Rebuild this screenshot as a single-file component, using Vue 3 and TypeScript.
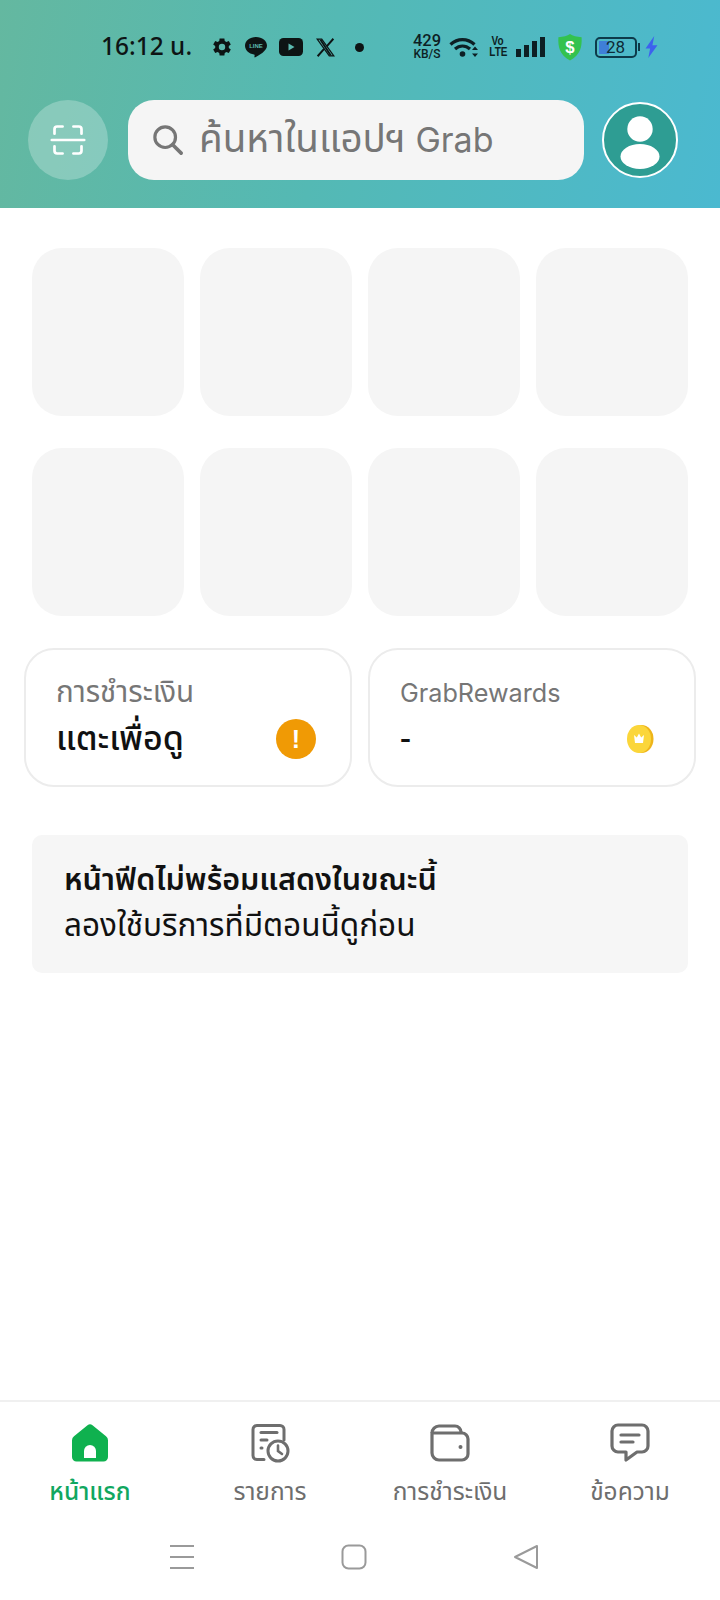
<template>
  <div class="page">
    <header class="header">
      <div class="status">
        <span class="time">16:12 น.</span>
        <svg class="st-gear" viewBox="0 0 24 24" width="22" height="22">
          <path fill="#0d1414" d="M19.4 13a7.500 7.500 0 0 0 0-2l2.200-1.700-2.200-3.800-2.600 1a7.500 7.500 0 0 0-1.800-1L14.600 2.700h-5.200L9 5.500a7.500 7.500 0 0 0-1.800 1l-2.600-1-2.200 3.800L4.600 11a7.500 7.500 0 0 0 0 2l-2.200 1.700 2.200 3.800 2.600-1a7.500 7.500 0 0 0 1.800 1l.4 2.800h5.200l.4-2.800a7.500 7.500 0 0 0 1.800-1l2.600 1 2.200-3.800zM12 15.500a3.500 3.500 0 1 1 0-7 3.500 3.500 0 0 1 0 7z" />
        </svg>
        <span class="st-line">
          <svg viewBox="0 0 24 24" width="24" height="24">
            <path fill="#0d1414" d="M12 2C5.800 2 1 5.900 1 10.800c0 4.400 3.800 8 9 8.700.6.100.7.500.6 1l-.2 1.300c0 .5.300.8 1 .5 2.900-1.400 11.600-6.300 11.600-11.500C23 5.900 18.200 2 12 2z" />
          </svg>
          <span class="st-line-text">LINE</span>
        </span>
        <svg class="st-yt" viewBox="0 0 24 18" width="24" height="18">
          <rect width="24" height="18" rx="4.500" fill="#0d1414" />
          <path d="M9.500 5.500v7l6-3.500z" fill="#5bbab0" />
        </svg>
        <svg class="st-x" viewBox="0 0 24 24" width="21" height="21">
          <path fill="none" stroke="#0d1414" stroke-width="1.400" d="M2.500 2.500h5.200l13.800 19h-5.200z" />
          <path fill="none" stroke="#0d1414" stroke-width="2.200" d="M21 2l-7.600 8.600M10.400 13.600 3 22" />
          <path fill="#0d1414" d="M5 3h2.500l11.800 18h-2.500z" />
        </svg>
        <span class="st-dot"></span>
        <span class="st-speed"><b>429</b><i>KB/S</i></span>
        <svg class="st-wifi" viewBox="0 0 30 24" width="30" height="24">
          <g fill="none" stroke="#0d1f24" stroke-width="3.200">
            <path d="M1.500 9.500c7-6.600 17-6.600 24 0" />
            <path d="M6 14c4.500-4 10.500-4 15 0" />
          </g>
          <circle cx="13.500" cy="19" r="2.800" fill="#0d1f24" />
          <path d="M26 11.500l3 3.500h-6zM26 22l3-3.500h-6z" fill="#0d1f24" />
        </svg>
        <span class="st-volte"><b>Vo</b><b>LTE</b></span>
        <span class="st-signal">
          <i v-for="h in signalBars" :key="h" :style="{ height: h + 'px' }"></i>
        </span>
        <svg class="st-shield" viewBox="0 0 28 30" width="26" height="28">
          <path fill="#33c24f" d="M14 1c3 2 7 3 12.500 3.500.5 10-1 19-12.500 25C2.500 23.500 1 14.500 1.500 4.500 7 4 11 3 14 1z" />
          <text x="14" y="21" text-anchor="middle" class="st-shield-text">$</text>
        </svg>
        <span class="st-battery">
          <span class="st-battery-body">
            <span class="st-battery-fill"></span>
            <span class="st-battery-num">28</span>
          </span>
          <span class="st-battery-cap"></span>
        </span>
        <svg class="st-bolt" viewBox="0 0 14 24" width="13" height="22">
          <path fill="#3d62ee" d="M10 0 .5 13.500h5L3.500 24l10-14H8z" />
        </svg>
      </div>

      <div class="search-row">
        <button class="scan">
          <svg viewBox="0 0 40 40" width="36" height="36">
            <g fill="none" stroke="#fff" stroke-width="3" stroke-linecap="round">
              <path d="M5 13V8a3 3 0 0 1 3-3h6" />
              <path d="M26 5h6a3 3 0 0 1 3 3v5" />
              <path d="M5 27v5a3 3 0 0 0 3 3h6" />
              <path d="M26 35h6a3 3 0 0 0 3-3v-5" />
              <path d="M2 20h36" />
            </g>
          </svg>
        </button>
        <div class="search">
          <svg viewBox="0 0 32 32" width="30" height="30">
            <circle cx="13" cy="13" r="11" fill="none" stroke="#767676" stroke-width="3.400" />
            <path d="M21 21l9 9" stroke="#767676" stroke-width="3.800" stroke-linecap="round" />
          </svg>
          <span class="search-text"><span class="search-thai">ค้นหาในแอปฯ</span> Grab</span>
        </div>
        <div class="avatar">
          <svg viewBox="0 0 72 72" width="72" height="72">
            <circle cx="36" cy="25" r="12.700" fill="#fff" />
            <ellipse cx="36" cy="52.500" rx="19.500" ry="12.500" fill="#fff" />
          </svg>
        </div>
      </div>
    </header>

    <section class="tiles">
      <div v-for="n in 8" :key="n" class="tile"></div>
    </section>

    <section class="cards">
      <div class="card">
        <div class="card-label">การชำระเงิน</div>
        <div class="card-row">
          <span class="card-value">แตะเพื่อดู</span>
          <span class="warn">!</span>
        </div>
      </div>
      <div class="card">
        <div class="card-label latin">GrabRewards</div>
        <div class="card-row">
          <span class="card-value">-</span>
          <svg class="coin" viewBox="0 0 28 28" width="28" height="28">
            <ellipse cx="15.500" cy="14" rx="12" ry="14" fill="#eeb51a" />
            <ellipse cx="13" cy="14" rx="12" ry="14" fill="#fbd63a" />
            <path d="M8 10l2.800 2.500L13 8.500l2.200 4L18 10l-1 8H9z" fill="#fff" />
          </svg>
        </div>
      </div>
    </section>

    <section class="notice">
      <div class="notice-title">หน้าฟีดไม่พร้อมแสดงในขณะนี้</div>
      <div class="notice-sub">ลองใช้บริการที่มีตอนนี้ดูก่อน</div>
    </section>

    <div class="spacer"></div>

    <nav class="tabs">
      <div class="tab active">
        <svg viewBox="0 0 40 40" width="40" height="40">
          <path fill="#0fb14f" d="M17.500 2.200a4 4 0 0 1 5 0l13.500 11a5 5 0 0 1 2 4V34a4.500 4.500 0 0 1-4.500 4.500h-27A4.500 4.500 0 0 1 2 34V17.200a5 5 0 0 1 2-4z" />
          <path fill="#fff" d="M14 35V28a6 6 0 0 1 12 0v7z" />
        </svg>
        <span>หน้าแรก</span>
      </div>
      <div class="tab">
        <svg viewBox="0 0 40 40" width="40" height="40">
          <g fill="none" stroke="#6e6e6e" stroke-width="3" stroke-linecap="round">
            <path d="M14 36.500H7a4 4 0 0 1-4-4V6.500a4 4 0 0 1 4-4h23a4 4 0 0 1 4 4V17" />
            <path d="M11 9.500h16" />
            <path d="M11 17h6" />
            <path d="M11 25h1" />
            <circle cx="28" cy="28" r="10" />
            <path d="M28 22.500V28l4 3" stroke-width="2.600" />
          </g>
        </svg>
        <span>รายการ</span>
      </div>
      <div class="tab">
        <svg viewBox="0 0 40 40" width="40" height="40">
          <g fill="none" stroke="#6e6e6e" stroke-width="3.200" stroke-linejoin="round">
            <path d="M2 10a7 7 0 0 1 7-7h16a6 6 0 0 1 6 6l1 .500" />
            <path d="M2 10v20a7 7 0 0 0 7 7h23a6 6 0 0 0 6-6V16a6 6 0 0 0-6-6H2z" />
          </g>
          <circle cx="30.500" cy="24" r="2" fill="#6e6e6e" />
        </svg>
        <span>การชำระเงิน</span>
      </div>
      <div class="tab">
        <svg viewBox="0 0 40 40" width="40" height="40">
          <path fill="none" stroke="#6e6e6e" stroke-width="3.200" stroke-linejoin="round" d="M8 2h24a6 6 0 0 1 6 6v15a6 6 0 0 1-6 6h-5l-11 8v-8H8a6 6 0 0 1-6-6V8a6 6 0 0 1 6-6z" />
          <path d="M11 12h18M11 19h12" stroke="#6e6e6e" stroke-width="3.200" stroke-linecap="round" />
        </svg>
        <span>ข้อความ</span>
      </div>
    </nav>

    <div class="sysnav">
      <svg viewBox="0 0 26 26" width="26" height="26">
        <path d="M1 2h24M1 13h24M1 24h24" stroke="#9a9a9a" stroke-width="2" />
      </svg>
      <svg viewBox="0 0 26 26" width="26" height="26">
        <rect x="1.500" y="1.500" width="23" height="23" rx="6" fill="none" stroke="#9a9a9a" stroke-width="2" />
      </svg>
      <svg viewBox="0 0 26 26" width="26" height="26">
        <path d="M24 2v22L2 13z" fill="none" stroke="#9a9a9a" stroke-width="2" stroke-linejoin="round" />
      </svg>
    </div>
  </div>
</template>

<script setup lang="ts">
const signalBars: number[] = [8, 12, 16, 20];
</script>

<style>
html,
body {
  margin: 0;
  background: #fff;
}
</style>

<style scoped>
.page {
  width: 720px;
  height: 1600px;
  display: flex;
  flex-direction: column;
  font-family: "Noto Sans Thai", "Noto Sans", Inter, sans-serif;
  background: #fff;
  overflow: hidden;
}
.header {
  height: 208px;
  box-sizing: border-box;
  padding-top: 29px;
  background: linear-gradient(100deg, #64b8a0 0%, #54b9b4 45%, #4bb9d0 100%);
}
.status {
  height: 36px;
  display: flex;
  align-items: center;
  padding-left: 101px;
  color: #0d1414;
}
.time {
  width: 110px;
  font-size: 24.500px;
  font-weight: 500;
  white-space: nowrap;
}
.st-line {
  position: relative;
  width: 24px;
  height: 24px;
  margin-left: 11px;
}
.st-line-text {
  position: absolute;
  left: 0;
  right: 0;
  top: 7px;
  text-align: center;
  font: 700 6px/8px "Liberation Sans", sans-serif;
  color: #5bbab0;
}
.st-yt {
  margin-left: 11px;
}
.st-x {
  margin-left: 12px;
}
.st-dot {
  width: 9px;
  height: 9px;
  border-radius: 50%;
  background: #0d1414;
  margin-left: 19px;
}
.st-speed {
  width: 30px;
  margin-left: 48px;
  display: flex;
  flex-direction: column;
  align-items: center;
  font-family: Roboto, sans-serif;
  color: #0d1f24;
}
.st-speed b {
  font-size: 16.500px;
  line-height: 14px;
  font-weight: 500;
}
.st-speed i {
  font-style: normal;
  font-size: 12px;
  line-height: 13px;
  font-weight: 500;
}
.st-wifi {
  margin-left: 7px;
}
.st-volte {
  width: 16px;
  margin-left: 11px;
  display: flex;
  flex-direction: column;
  align-items: center;
  font-family: "Liberation Sans Narrow", "Liberation Sans", sans-serif;
  color: #0d1f24;
}
.st-volte b {
  font-size: 12.500px;
  line-height: 11px;
  transform: scaleX(0.8);
}
.st-signal {
  display: flex;
  align-items: flex-end;
  gap: 3.500px;
  height: 20px;
  margin-left: 10px;
}
.st-signal i {
  width: 4.500px;
  background: #0d1f24;
}
.st-shield {
  margin-left: 12px;
}
.st-shield-text {
  font: 700 18px "Liberation Sans", sans-serif;
  fill: #fff;
}
.st-battery {
  display: flex;
  align-items: center;
  margin-left: 12px;
}
.st-battery-body {
  position: relative;
  width: 42px;
  height: 21px;
  box-sizing: border-box;
  border: 2px solid #0d3a4a;
  border-radius: 5px;
  overflow: hidden;
}
.st-battery-fill {
  position: absolute;
  left: 2px;
  top: 2px;
  bottom: 2px;
  width: 10px;
  background: #3f7fd8;
}
.st-battery-num {
  position: relative;
  display: block;
  text-align: center;
  font: 400 17px/17px Roboto, sans-serif;
  color: #0d2a36;
}
.st-battery-cap {
  width: 2px;
  height: 8px;
  margin-left: 1px;
  background: #0d3a4a;
}
.st-bolt {
  margin-left: 5px;
}
.search-row {
  display: flex;
  align-items: center;
  margin-top: 35px;
  padding-left: 28px;
}
.scan {
  width: 80px;
  height: 80px;
  padding: 0;
  border: 0;
  border-radius: 50%;
  background: rgba(255, 255, 255, 0.25);
  display: flex;
  align-items: center;
  justify-content: center;
}
.search {
  width: 456px;
  height: 80px;
  margin-left: 20px;
  box-sizing: border-box;
  padding-left: 25px;
  border-radius: 26px;
  background: #f5f5f5;
  display: flex;
  align-items: center;
  gap: 16px;
  color: #767676;
  white-space: nowrap;
}
.search-text {
  font-family: Inter, sans-serif;
  font-size: 34px;
}
.search-thai {
  font-family: "Noto Sans Thai", "Noto Sans", sans-serif;
  font-size: 38.500px;
}
.avatar {
  width: 76px;
  height: 76px;
  margin-left: 18px;
  box-sizing: border-box;
  border: 2px solid #fff;
  border-radius: 50%;
  background: #2e9d93;
}
.tiles {
  display: grid;
  grid-template-columns: repeat(4, 152px);
  grid-auto-rows: 168px;
  gap: 32px 16px;
  padding: 40px 32px 0;
}
.tile {
  background: #f5f5f5;
  border-radius: 30px;
}
.cards {
  display: grid;
  grid-template-columns: 328px 328px;
  gap: 16px;
  padding: 32px 24px 0;
}
.card {
  height: 139px;
  box-sizing: border-box;
  padding: 25px 34px 0 30px;
  border: 2px solid #ececec;
  border-radius: 30px;
  background: #fff;
}
.card-label {
  font-size: 29.500px;
  line-height: 36px;
  color: #767676;
  white-space: nowrap;
}
.card-label.latin {
  font-family: Inter, sans-serif;
  font-size: 25.200px;
}
.card-row {
  margin-top: 5px;
  display: flex;
  align-items: center;
  justify-content: space-between;
  height: 46px;
}
.card-value {
  font-size: 34px;
  font-weight: 500;
  color: #111;
  white-space: nowrap;
}
.warn {
  width: 40px;
  height: 40px;
  border-radius: 50%;
  background: #f09a05;
  color: #fff;
  display: flex;
  align-items: center;
  justify-content: center;
  font: 700 25px "Liberation Sans", sans-serif;
}
.coin {
  margin-right: 6px;
}
.notice {
  height: 138px;
  box-sizing: border-box;
  margin: 48px 32px 0;
  padding: 23px 32px 0;
  border-radius: 10px;
  background: #f6f6f6;
  color: #111;
}
.notice-title {
  font-size: 30.500px;
  line-height: 46px;
  font-weight: 600;
  white-space: nowrap;
}
.notice-sub {
  font-size: 31.500px;
  line-height: 46px;
  white-space: nowrap;
}
.spacer {
  flex: 1;
}
.tabs {
  height: 122px;
  box-sizing: border-box;
  padding-top: 21px;
  border-top: 2px solid #f0f0f0;
  display: grid;
  grid-template-columns: repeat(4, 180px);
}
.tab {
  display: flex;
  flex-direction: column;
  align-items: center;
  gap: 12px;
  font-size: 24.500px;
  line-height: 36px;
  color: #6e6e6e;
  white-space: nowrap;
}
.tab.active {
  color: #10a760;
  font-weight: 500;
}
.sysnav {
  height: 78px;
  box-sizing: border-box;
  padding: 22px 181px 0 169px;
  display: flex;
  justify-content: space-between;
  align-items: flex-start;
}
</style>
